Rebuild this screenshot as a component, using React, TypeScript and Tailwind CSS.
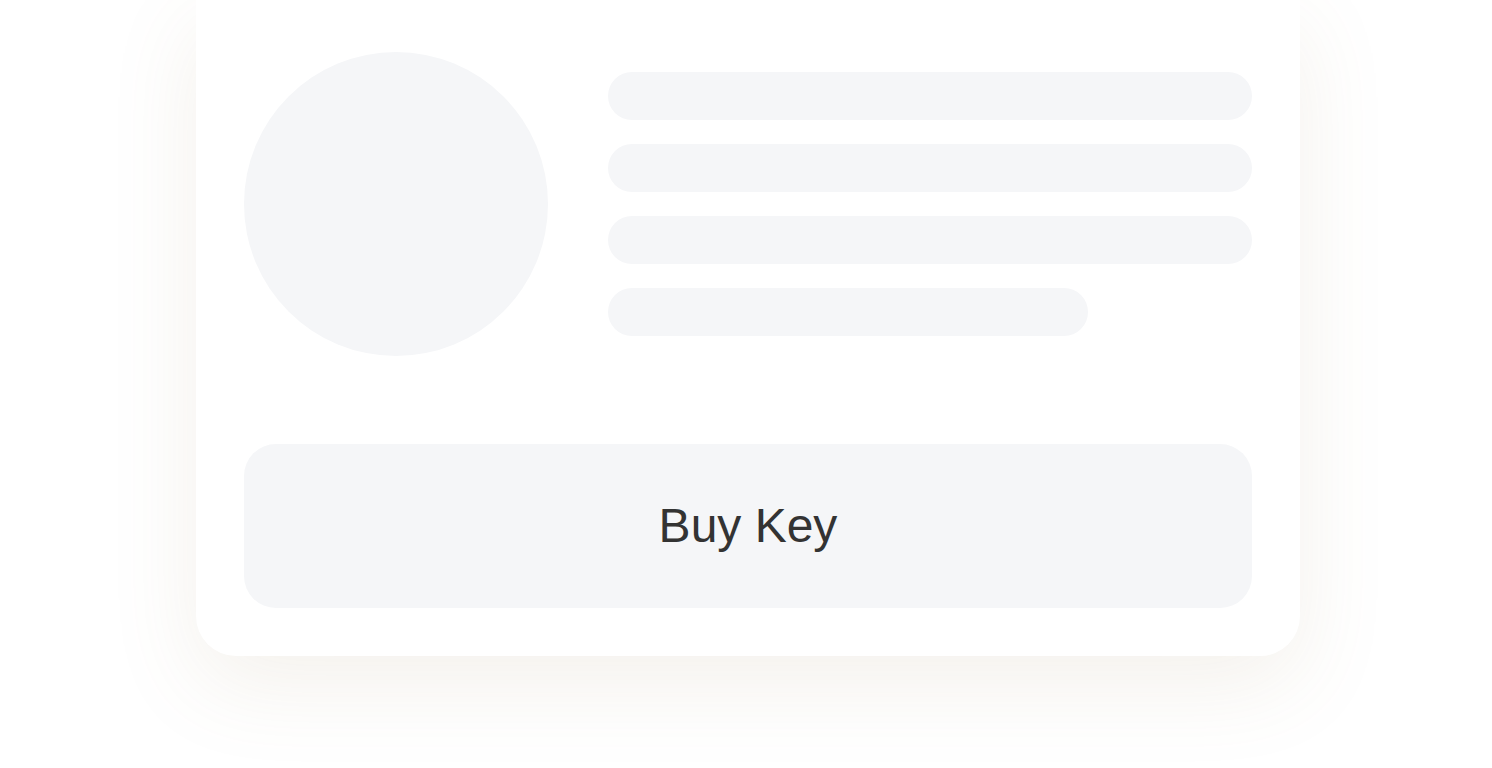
export default function App() {
  return (
    <div className="flex min-h-screen justify-center overflow-hidden bg-white pl-1 font-['Liberation_Sans',Arial,sans-serif]">
      <div className="flex h-[656px] w-[1104px] flex-col rounded-b-[40px] bg-white px-12 pb-12 pt-[52px] shadow-[0_28px_90px_rgba(150,120,70,0.1)]">
        <div className="flex gap-[60px]">
          <div className="h-[304px] w-[304px] shrink-0 rounded-full bg-[#f5f6f8]" />

          <div className="flex flex-1 flex-col gap-6 pt-5">
            <div className="h-12 w-full rounded-full bg-[#f5f6f8]" />
            <div className="h-12 w-full rounded-full bg-[#f5f6f8]" />
            <div className="h-12 w-full rounded-full bg-[#f5f6f8]" />
            <div className="h-12 w-[480px] rounded-full bg-[#f5f6f8]" />
          </div>
        </div>

        <button
          type="button"
          className="mt-auto flex h-[164px] w-full items-center justify-center rounded-[32px] bg-[#f5f6f8] text-[48px] text-[#333333]"
        >
          Buy Key
        </button>
      </div>
    </div>
  );
}
